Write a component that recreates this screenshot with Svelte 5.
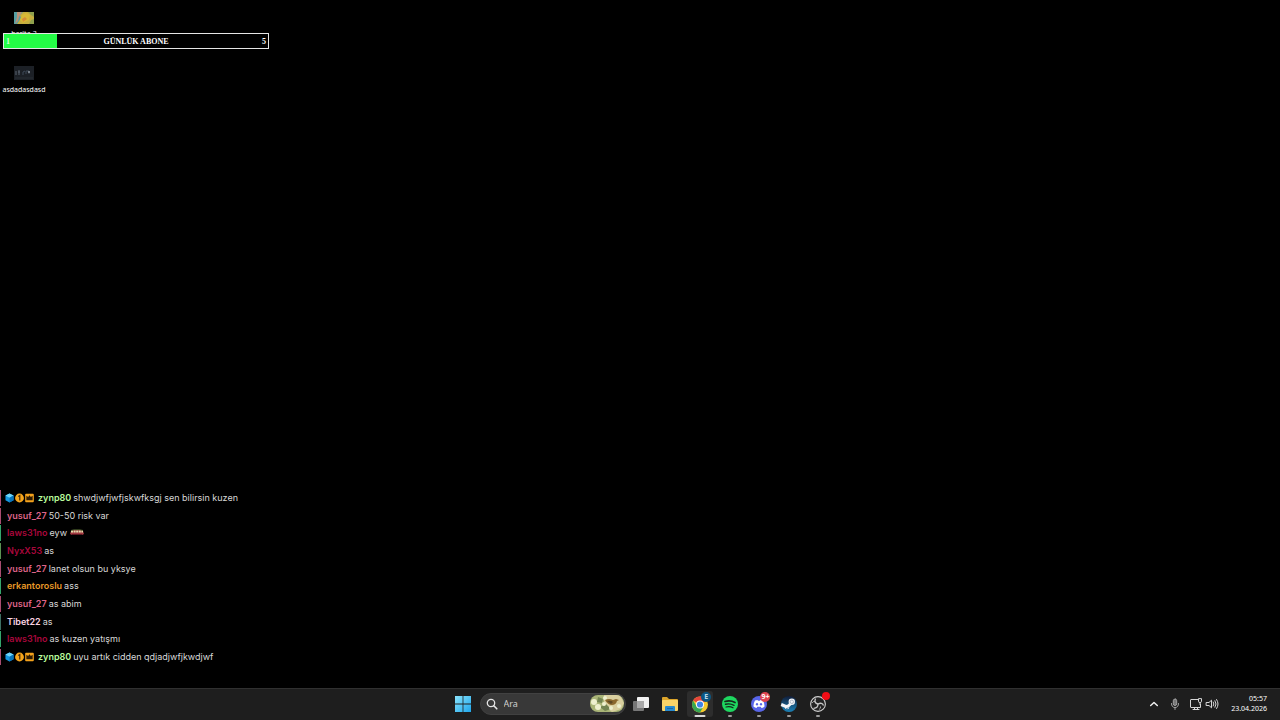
<script lang="ts">
	const GOAL = { current: 1, total: 5, title: "GÜNLÜK ABONE" };

	type Message = {
		user: string;
		color: string;
		bar: string;
		text: string;
		badges?: boolean;
		emote?: boolean;
	};

	const messages: Message[] = [
		{ user: "zynp80", color: "#b9fb9c", bar: "#a84c70", text: "shwdjwfjwfjskwfksgj sen bilirsin kuzen", badges: true },
		{ user: "yusuf_27", color: "#dd6488", bar: "#a84c70", text: "50-50 risk var" },
		{ user: "laws31no", color: "#a9073c", bar: "#35a66c", text: "eyw", emote: true },
		{ user: "NyxX53", color: "#a9073c", bar: "#5c9352", text: "as" },
		{ user: "yusuf_27", color: "#dd6488", bar: "#a84c70", text: "lanet olsun bu yksye" },
		{ user: "erkantoroslu", color: "#e99a28", bar: "#35a66c", text: "ass" },
		{ user: "yusuf_27", color: "#dd6488", bar: "#a84c70", text: "as abim" },
		{ user: "Tibet22", color: "#fbd3e2", bar: "#3d6e62", text: "as" },
		{ user: "laws31no", color: "#a9073c", bar: "#35a66c", text: "as kuzen yatışmı" },
		{ user: "zynp80", color: "#b9fb9c", bar: "#a84c70", text: "uyu artık cidden qdjadjwfjkwdjwf", badges: true }
	];

	let query = $state("");
	let active = $state("chrome");

	const apps = [
		{ id: "tasks", name: "Görev görünümü", running: false },
		{ id: "files", name: "Dosya Gezgini", running: false },
		{ id: "chrome", name: "Google Chrome", running: true },
		{ id: "spotify", name: "Spotify", running: true },
		{ id: "discord", name: "Discord", running: true },
		{ id: "steam", name: "Steam", running: true },
		{ id: "obs", name: "OBS Studio", running: true }
	];
</script>

<svelte:head>
	<title>Masaüstü</title>
</svelte:head>

<div class="screen">
	<main>
		<div class="files">
			<button class="file">
				<svg width="20" height="12" viewBox="0 0 20 12" aria-hidden="true">
					<rect width="20" height="12" fill="#c5ae3f" />
					<path d="M0 0h9L6 3 7 6 3 12H0z" fill="#559fa3" />
					<path d="M3 0h5L5 5 4 9 1 12 3 5z" fill="#b98f76" />
					<path d="M8 3 12 1 16 3 15 8 9 11 6 8z" fill="#d7b835" />
					<path d="M14 0h6v5l-3-2zM17 8l3-1v5h-5z" fill="#8fa04d" />
					<path d="M8 7l3-2 2 2-4 3z" fill="#d58b38" />
				</svg>
				<span>harita-3</span>
			</button>
			<button class="file">
				<svg width="20" height="14" viewBox="0 0 20 14" aria-hidden="true">
					<rect width="20" height="14" fill="#1c2026" />
					<path d="M2 5v4M5 4v5M4 6h2" stroke="#59636f" fill="none" />
					<path d="M9 9V6l2-1M12 8V5h3v3" stroke="#3d4856" fill="none" />
					<circle cx="15" cy="6" r="1" fill="#8d949e" />
					<path d="M1 12h18" stroke="#292e35" />
				</svg>
				<span>asdadasdasd</span>
			</button>
		</div>

		<div class="goal">
			<div class="fill" style:width="{(GOAL.current / GOAL.total) * 100}%"></div>
			<span class="current">{GOAL.current}</span>
			<span>{GOAL.title}</span>
			<span class="total">{GOAL.total}</span>
		</div>

		<ul class="chat">
			{#each messages as message}
				<li>
					<i class="bar" style:background={message.bar}></i>
					{#if message.badges}
						<span class="badges">
							<svg width="9" height="10" viewBox="0 0 10 10" aria-hidden="true">
								<path d="M5 0 9.500 2.300v5.200L5 10 .5 7.500V2.300z" fill="#1597df" />
								<path d="M5 0 9.500 2.300 5 4.700.5 2.300z" fill="#6fd5fa" />
								<path d="M5 4.700 9.500 2.300v5.200L5 10z" fill="#0873b8" />
							</svg>
							<svg width="9" height="10" viewBox="0 0 10 10" aria-hidden="true">
								<circle cx="5" cy="5" r="4.900" fill="#f5a51c" />
								<path d="M3.600 3.400 5.300 2.300v5.400" fill="none" stroke="#4b2903" stroke-width="1.400" />
							</svg>
							<svg width="9" height="10" viewBox="0 0 10 10" aria-hidden="true">
								<rect x=".2" y=".3" width="9.600" height="9.400" rx="1" fill="#f4a21c" />
								<path d="M1.500 2.500 3.500 4 5 2l1.500 2 2-1.500V7.500h-7z" fill="#2e1b03" />
							</svg>
						</span>
					{/if}
					<b style:color={message.color}>{message.user}</b>
					<span>{message.text}</span>
					{#if message.emote}
						<svg class="emote" width="14" height="8" viewBox="0 0 14 8" aria-hidden="true">
							<path d="M0 5 1 2 4 1h6l3 1 1 3-2 1H2z" fill="#a33a42" />
							<path d="M1 2.500h12" stroke="#e3dfae" stroke-width="2" stroke-dasharray="2 .6" />
							<path d="M1 1.500 4 .8h6l3 .7" stroke="#637b3b" stroke-width=".7" fill="none" />
							<path d="M2 5.500h10" stroke="#5e1721" />
						</svg>
					{/if}
				</li>
			{/each}
		</ul>
	</main>

	<footer>
		<div class="center">
			<button class="start" aria-label="Başlat">
				<svg width="16" height="16" viewBox="0 0 16 16">
					<defs>
						<linearGradient id="win" x2="1" y2="1">
							<stop stop-color="#8ae4fc" />
							<stop offset="1" stop-color="#1fa6eb" />
						</linearGradient>
					</defs>
					<path d="M0 0h7.600v7.600H0zM8.400 0H16v7.600H8.400zM0 8.400h7.600V16H0zM8.400 8.400H16V16H8.400z" fill="url(#win)" />
				</svg>
			</button>

			<label class="search">
				<svg width="12" height="12" viewBox="0 0 12 12" aria-hidden="true">
					<circle cx="5" cy="5" r="3.700" fill="none" stroke="#e4e4e4" stroke-width="1.300" />
					<path d="m7.800 7.800 3 3" stroke="#e4e4e4" stroke-width="1.600" stroke-linecap="round" />
				</svg>
				<input type="text" placeholder="Ara" aria-label="Ara" bind:value={query} />
				<svg class="highlight" width="34" height="17" viewBox="0 0 34 17" aria-hidden="true">
					<rect width="34" height="17" fill="#a9b477" />
					<path d="M14 0h16l4 8-3 6-9 3-8-6z" fill="#d9cf9f" />
					<path d="M8 2l5 2-1 4-5-1zM10 12l6-3 5 5-6 2z" fill="#738452" />
					<g fill="#eef0cf">
						<circle cx="4" cy="7" r="3" />
						<circle cx="8" cy="12" r="3" />
						<circle cx="14" cy="9" r="2" />
						<circle cx="15" cy="3" r="2" />
						<circle cx="21" cy="13" r="2" />
						<circle cx="29" cy="11" r="2" />
					</g>
					<path d="M15 5q4-2 8 0l3-1 3 1-2 1q-1 4-5 4-4 0-7-5z" fill="#8b692e" />
					<path d="M17 6q4-1 6 1l-2 2z" fill="#5e4924" />
				</svg>
			</label>

			<nav class="apps">
				{#each apps as app}
					<button
						class="app"
						class:running={app.running}
						class:active={active === app.id}
						aria-label={app.name}
						onclick={() => (active = app.id)}
					>
						{#if app.id === "tasks"}
							<svg width="18" height="18" viewBox="0 0 18 18">
								<rect x="5" y="2" width="12" height="11" rx="1" fill="#f2f2f2" />
								<rect x="1" y="6" width="11" height="10" rx="1" fill="#777" />
								<path d="M5 6h7v7H5z" fill="#aaa" />
							</svg>
						{:else if app.id === "files"}
							<svg width="18" height="18" viewBox="0 0 18 18">
								<path d="M1 3q0-1 1-1h4l2 2h8q1 0 1 1v5H1z" fill="#dca52b" />
								<rect x="1" y="5" width="16" height="11" rx="1" fill="#f8d368" />
								<path d="M4 16v-4q0-1 1-1h8q1 0 1 1v4z" fill="#2689ce" />
								<path d="M6 13.500h6" stroke="#1768aa" />
							</svg>
						{:else if app.id === "chrome"}
							<svg width="18" height="18" viewBox="0 0 18 18">
								<circle cx="9" cy="9.500" r="8" fill="#f6c92e" />
								<path d="M9 9.500 2.100 5.500A8 8 0 0 1 15.900 5.500z" fill="#e6453b" />
								<path d="M2.100 5.500A8 8 0 0 0 9 17.500l3.500-6L9 9.500 5.600 11.500z" fill="#36a653" />
								<circle cx="9" cy="9.500" r="4" fill="#fff" />
								<circle cx="9" cy="9.500" r="3.100" fill="#3f84e8" />
							</svg>
							<span class="badge profile">E</span>
						{:else if app.id === "spotify"}
							<svg width="18" height="18" viewBox="0 0 18 18">
								<circle cx="9" cy="9" r="8" fill="#1ed760" />
								<g fill="none" stroke="#14281a" stroke-linecap="round">
									<path d="M4 6.500q5.500-1.500 10 1" stroke-width="1.700" />
									<path d="M4.500 9.300q4.500-1.200 8.500 1" stroke-width="1.400" />
									<path d="M5 12q4-1 7 .8" stroke-width="1.200" />
								</g>
							</svg>
						{:else if app.id === "discord"}
							<svg width="18" height="18" viewBox="0 0 18 18">
								<circle cx="9" cy="9" r="8" fill="#5865e8" />
								<path d="M5 5.500 7.500 5l.5.800h2l.5-.8 2.500.5q1.700 3 1.500 6-1.500 1.300-3 1.500l-.8-1.200H7.300L6.500 13Q5 12.800 3.500 11.500q-.2-3 1.500-6z" fill="#fff" />
								<ellipse cx="7" cy="9.300" rx="1.100" ry="1.300" fill="#5865e8" />
								<ellipse cx="11" cy="9.300" rx="1.100" ry="1.300" fill="#5865e8" />
							</svg>
							<span class="badge count">9+</span>
						{:else if app.id === "steam"}
							<svg width="18" height="18" viewBox="0 0 18 18">
								<defs>
									<linearGradient id="steam" x2="0" y2="1">
										<stop stop-color="#111d39" />
										<stop offset="1" stop-color="#1b82b7" />
									</linearGradient>
								</defs>
								<circle cx="9" cy="9" r="8" fill="url(#steam)" />
								<path d="M1.200 9.500 7 12l4.500-4" stroke="#f3f5f8" stroke-width="3" fill="none" />
								<circle cx="11.800" cy="6.800" r="3.200" fill="#f3f5f8" />
								<circle cx="11.800" cy="6.800" r="1.700" fill="#f3f5f8" stroke="#8494a8" stroke-width=".6" />
								<circle cx="7" cy="12" r="2.300" fill="#f3f5f8" />
								<path d="M6 13.500q2 .4 2.300-1.200" stroke="#216795" stroke-width=".7" fill="none" />
							</svg>
						{:else}
							<svg width="18" height="18" viewBox="0 0 18 18">
								<circle cx="9" cy="9" r="7.400" fill="#242424" stroke="#d0d0d0" stroke-width="1.100" />
								<g fill="none" stroke="#c8c8c8" stroke-width="1.300">
									<path d="M6.500 3.500Q4.700 8 9 9q4-2 5.500 1.500" />
									<path d="M9 9q0 4.500-4.500 4.300" />
									<path d="M3 8q1-2 3-1.500M10 14.500q2-1 1.500-3" stroke-width=".8" />
								</g>
							</svg>
							<span class="badge record"></span>
						{/if}
					</button>
				{/each}
			</nav>
		</div>

		<div class="tray">
			<button class="more" aria-label="Gizli simgeleri göster">
				<svg width="14" height="14" viewBox="0 0 14 14">
					<path d="m3.700 8.500 3.300-3 3.300 3" />
				</svg>
			</button>
			<button class="mic" aria-label="Mikrofon">
				<svg width="14" height="14" viewBox="0 0 14 14">
					<rect x="5.300" y="2" width="3.400" height="6.500" rx="1.700" fill="#777" />
					<path d="M3.500 6.500q0 4 3.500 4t3.500-4M7 10.500v2" />
				</svg>
			</button>
			<div class="status">
				<button aria-label="Ağ">
					<svg width="14" height="14" viewBox="0 0 14 14">
						<path d="M9 2.500H2q-.5 0-.5.5v7q0 .5.500.500h9.500V7M4 12.500h6M5.500 10.500v2M8.500 10.500v2" />
						<path d="M9.500 2v2.500q0 1 1.500 1t1.500-1V2zM11 5.500v2" />
					</svg>
				</button>
				<button aria-label="Ses">
					<svg width="14" height="14" viewBox="0 0 14 14">
						<path d="M1.500 5.500H4l2.500-2.300v7.600L4 8.500H1.500zM8.300 5q1.300 2 0 4M10 3.700q2.200 3.300 0 6.600M11.600 2.500q3 4.500 0 9" />
					</svg>
				</button>
			</div>
			<button class="clock">
				<time>05:57</time>
				<time>23.04.2026</time>
			</button>
		</div>
	</footer>
</div>

<style>
	:global(body) {
		background: #000;
	}

	.screen {
		min-height: 100vh;
		display: flex;
		flex-direction: column;
		color: #fff;
		font-family: "Noto Sans", sans-serif;
	}

	button {
		padding: 0;
		border: 0;
		background: none;
		color: inherit;
		font: inherit;
		cursor: pointer;
	}

	svg {
		display: block;
		flex: none;
	}

	main {
		position: relative;
		flex: 1;
		display: flex;
		flex-direction: column;
		justify-content: space-between;
		padding: 12px 0 22px;
	}

	.files {
		display: flex;
		flex-direction: column;
		align-items: flex-start;
		gap: 27px;
	}

	.file {
		width: 48px;
		display: flex;
		flex-direction: column;
		align-items: center;
		gap: 5px;
		font-size: 7px;
		line-height: 10px;
	}

	/* sits over the desktop icons */
	.goal {
		position: absolute;
		top: 33px;
		left: 3px;
		width: 266px;
		height: 16px;
		box-sizing: border-box;
		display: flex;
		align-items: center;
		justify-content: space-between;
		padding: 1px 2px 0;
		border: 1px solid #e6e6e6;
		background: #000;
		font: bold 8px/14px "Liberation Serif", serif;
	}

	.goal span {
		position: relative;
	}

	.fill {
		position: absolute;
		inset: 0 auto 0 0;
		background: #24fc46;
	}

	.goal .current {
		color: #d3ffd8;
	}

	.chat {
		min-height: 177px;
		margin: 0;
		padding: 0;
		display: grid;
		grid-auto-rows: 1fr;
		list-style: none;
		font-family: Inter, sans-serif;
		font-size: 9px;
		line-height: 16px;
		color: #d8d8d8;
	}

	.chat li {
		display: flex;
		align-items: center;
		gap: 2px;
	}

	.chat b {
		font-weight: 600;
	}

	.bar {
		width: 1px;
		height: 16px;
		margin-right: 4px;
	}

	.badges {
		display: flex;
		gap: 1px;
		margin: 0 2px 0 -2px;
	}

	.emote {
		margin-left: 1px;
	}

	footer {
		height: 32px;
		box-sizing: border-box;
		display: grid;
		grid-template-columns: 1fr auto 1fr;
		align-items: center;
		padding: 0 0 2px 1px;
		border-top: 1px solid #303030;
		background: #1e1e1e;
	}

	.center {
		grid-column: 2;
		display: flex;
		align-items: center;
	}

	.start {
		width: 26px;
		height: 26px;
		display: grid;
		place-items: center;
	}

	.search {
		width: 146px;
		height: 22px;
		box-sizing: border-box;
		display: flex;
		align-items: center;
		gap: 6px;
		margin: 0 2px 0 4px;
		padding: 0 1px 0 5px;
		border: 1px solid #414141;
		border-radius: 11px;
		background: #383838;
	}

	.search input {
		flex: 1;
		min-width: 0;
		padding: 0;
		border: 0;
		outline: 0;
		background: none;
		color: #fff;
		font: 9px "Noto Sans", sans-serif;
	}

	.search input::placeholder {
		color: #cfcfcf;
	}

	.highlight {
		border-radius: 8px;
	}

	.apps {
		width: 204px;
		display: flex;
		gap: 3px;
	}

	.app {
		position: relative;
		flex: 1;
		height: 26px;
		display: grid;
		place-items: center;
		border-radius: 3px;
	}

	.app.active {
		background: #2d2d2d;
	}

	.running::after {
		content: "";
		position: absolute;
		bottom: 0;
		left: 50%;
		width: 4px;
		height: 2px;
		border-radius: 1px;
		background: #9c9c9c;
		transform: translateX(-50%);
	}

	.active::after {
		width: 11px;
		background: #d9d9d9;
	}

	.badge {
		position: absolute;
		top: 1px;
		right: 2px;
		height: 10px;
		min-width: 10px;
		border-radius: 5px;
		font-size: 7px;
		font-weight: bold;
		line-height: 10px;
		text-align: center;
	}

	.profile {
		background: #0c5682;
		color: #b9d7e8;
	}

	.count {
		background: #e04450;
	}

	.record {
		width: 8px;
		height: 8px;
		min-width: 0;
		background: #f20d16;
	}

	.tray {
		display: flex;
		align-items: center;
		justify-content: flex-end;
		gap: 7px;
		padding-right: 13px;
	}

	.tray svg {
		fill: none;
		stroke: #d6d6d6;
		stroke-width: 1;
		stroke-linecap: round;
		stroke-linejoin: round;
	}

	.tray .more svg {
		stroke: #f0f0f0;
		stroke-width: 1.5;
	}

	.tray .mic svg {
		stroke: #a2a2a2;
	}

	.status {
		display: flex;
		gap: 2px;
	}

	.clock {
		display: flex;
		flex-direction: column;
		align-items: flex-end;
		margin-left: 5px;
		font-size: 7px;
		line-height: 10px;
	}
</style>
